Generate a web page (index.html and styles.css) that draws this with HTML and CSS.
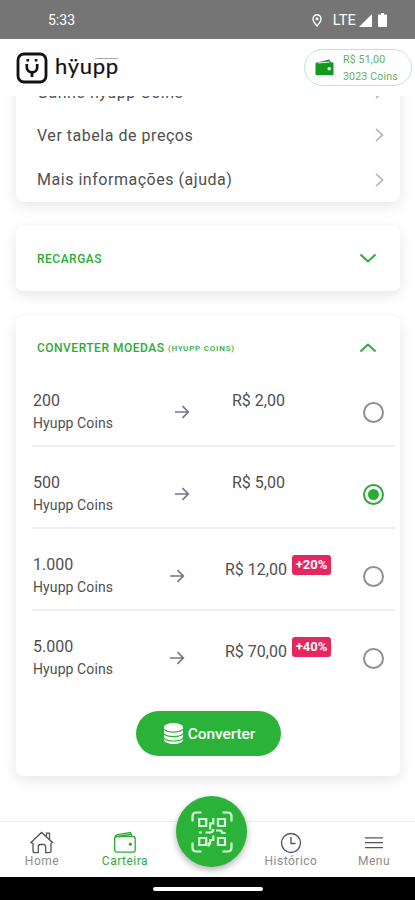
FILE: index.html
```html
<!DOCTYPE html>
<html lang="pt-BR">
<head>
<meta charset="utf-8">
<meta name="viewport" content="width=device-width, initial-scale=1">
<title>Hyupp Carteira</title>
<link rel="stylesheet" href="styles.css">
</head>
<body>
<div class="status">
  <span class="clock">5:33</span>
  <span class="status-icons">
    <svg width="10" height="13" viewBox="0 0 10 13"><path d="M5 .8C2.700.8 1 2.500 1 4.700c0 3 4 7.300 4 7.300s4-4.300 4-7.300C9 2.500 7.300.8 5 .8z" fill="none" stroke="#fff" stroke-width="1.400"/><circle cx="5" cy="4.800" r="1.500" fill="#fff"/></svg>
    <span class="lte">LTE</span>
    <svg class="signal" width="13" height="13" viewBox="0 0 13 13"><path d="M13 0v13H0z" fill="#fff"/></svg>
    <svg class="battery" width="9" height="14" viewBox="0 0 9 14"><path d="M3 0h3v1.500h2c.6 0 1 .4 1 1V13c0 .6-.4 1-1 1H1c-.6 0-1-.4-1-1V2.500c0-.6.4-1 1-1h2z" fill="#fff"/></svg>
  </span>
</div>
<header class="header">
  <div class="brand">
    <svg width="32" height="32" viewBox="0 0 32 32" fill="none" stroke="#111"><rect x="2" y="2" width="28" height="28" rx="6" stroke-width="2.800"/><path d="M10.800 12v3.200a5.200 5.200 0 0 0 10.400 0V12M16 20.500v4.500" stroke-width="2.700"/><path d="M10.500 8.300h2.600M18.800 8.300h2.600" stroke-width="2.400"/></svg>
    <span class="wordmark">hÿupp</span>
  </div>
  <div class="balance">
    <svg width="19" height="17" viewBox="0 0 19 17"><path d="M1 3.800 14.500.5l1.200 2.700H17c.8 0 1.500.6 1.500 1.500v10c0 .9-.7 1.600-1.500 1.600H2.200C1.200 16.300.5 15.600.5 14.700V5.200C.5 4.500.6 4 1 3.800z" fill="#109a1e"/><path d="M3 4 14.500 3.100" stroke="#fff" stroke-width=".9"/><circle cx="14.200" cy="9.800" r="1.700" fill="#fff"/></svg>
    <div class="amounts"><span>R$ 51,00</span><span>3023 Coins</span></div>
  </div>
</header>
<main class="content">
  <section class="card links">
    <div class="link"><span>Ganhe hyupp Coins</span><svg width="9" height="14" viewBox="0 0 9 14"><path d="m1 1 6.500 6L1 13"/></svg></div>
    <div class="link"><span>Ver tabela de preços</span><svg width="9" height="14" viewBox="0 0 9 14"><path d="m1 1 6.500 6L1 13"/></svg></div>
    <div class="link"><span>Mais informações (ajuda)</span><svg width="9" height="14" viewBox="0 0 9 14"><path d="m1 1 6.500 6L1 13"/></svg></div>
  </section>
  <section class="card closed">
    <h2 class="title"><span>RECARGAS</span><svg width="18" height="11" viewBox="0 0 18 11"><path d="m1.500 1.500 7.500 7 7.500-7"/></svg></h2>
  </section>
  <section class="card open">
    <h2 class="title"><span>CONVERTER MOEDAS <small>(HYUPP COINS)</small></span><svg width="18" height="11" viewBox="0 0 18 11"><path d="m1.500 8.500 7.500-7 7.500 7"/></svg></h2>
    <div class="rows">
      <div class="row">
        <div class="coins"><b>200</b><span>Hyupp Coins</span></div>
        <svg class="arrow" width="16" height="14" viewBox="0 0 16 14"><path d="M1 7h13M8.500 1.200 14.300 7l-5.800 5.800"/></svg>
        <div class="price">R$ 2,00</div><i class="radio"></i>
      </div>
      <div class="row">
        <div class="coins"><b>500</b><span>Hyupp Coins</span></div>
        <svg class="arrow" width="16" height="14" viewBox="0 0 16 14"><path d="M1 7h13M8.500 1.200 14.300 7l-5.800 5.800"/></svg>
        <div class="price">R$ 5,00</div><i class="radio on"></i>
      </div>
      <div class="row bonus">
        <div class="coins"><b>1.000</b><span>Hyupp Coins</span></div>
        <svg class="arrow" width="16" height="14" viewBox="0 0 16 14"><path d="M1 7h13M8.500 1.200 14.300 7l-5.800 5.800"/></svg>
        <div class="price">R$ 12,00<em>+20%</em></div><i class="radio"></i>
      </div>
      <div class="row bonus">
        <div class="coins"><b>5.000</b><span>Hyupp Coins</span></div>
        <svg class="arrow" width="16" height="14" viewBox="0 0 16 14"><path d="M1 7h13M8.500 1.200 14.300 7l-5.800 5.800"/></svg>
        <div class="price">R$ 70,00<em>+40%</em></div><i class="radio"></i>
      </div>
    </div>
    <button class="convert">
      <svg width="19" height="21" viewBox="0 0 20 21" preserveAspectRatio="none"><path d="M0 4v13c0 2.200 4.500 4 10 4s10-1.800 10-4V4z" fill="#fff"/><ellipse cx="10" cy="4" rx="10" ry="4" fill="#fff"/><path d="M0 6.200c1.500 2 5.500 3 10 3s8.500-1 10-3M0 10.600c1.500 2 5.500 3 10 3s8.500-1 10-3M0 15c1.500 2 5.500 3 10 3s8.500-1 10-3" fill="none" stroke="#2bb239" stroke-width="1.200"/></svg>
      <span>Converter</span>
    </button>
  </section>
</main>
<nav class="nav">
  <a class="tab"><svg width="24" height="23" viewBox="0 0 24 23"><path d="M1 11.500 11.500 1.500 22.500 11.500 21 12.500V20c0 1-.6 1.700-1.600 1.700h-3.700v-6c0-1.300-.9-2.200-2.200-2.200h-3c-1.300 0-2.200.9-2.200 2.200v6H4.600c-1 0-1.600-.7-1.600-1.700v-7.500zM16.500 5V2.200h3v6"/></svg><span>Home</span></a>
  <a class="tab active"><svg width="24" height="23" viewBox="0 0 24 23"><rect x="1.700" y="5.500" width="20.500" height="15.700" rx="2.500"/><path d="M2 6.500C2 4.500 3 4 4.500 3.600L17.500 1.500l1.500 4M5 5.300l12.500-1.800"/><circle cx="17.300" cy="13.200" r="1" fill="#2bac36"/></svg><span>Carteira</span></a>
  <a class="tab scan"><span class="fab"><svg width="42" height="42" viewBox="0 0 42 42"><path d="M1.500 10.500V5.500c0-2.500 1.500-4 4-4h5M31.500 1.500h5c2.500 0 4 1.500 4 4v5M1.500 31.500v5c0 2.500 1.500 4 4 4h5M31.500 40.500h5c2.500 0 4-1.500 4-4v-5"/><path d="M8.200 8h7v7h-7zM27 8h7v7h-7zM8.200 27h7v7h-7zM27 27h7v7h-7z"/><path d="M22.300 7v5.500h-3.200v6M8 21.500h3M14.500 21.500h4.500c2 0 3.300-1 3.300-3.500M25 19.500h4c1.500 0 2 .8 2 2.500h3.500M22.300 24.500v4.500h-3.200v3.500h-2.500M19 34.500h-2.500"/></svg></span></a>
  <a class="tab"><svg width="24" height="23" viewBox="0 0 24 23"><circle cx="12" cy="12" r="9.500"/><path d="M12 6v6.500h4.500"/></svg><span>Histórico</span></a>
  <a class="tab"><svg width="24" height="23" viewBox="0 0 24 23"><path d="M3 6.800h18M3 11.700h18M3 16.600h18"/></svg><span>Menu</span></a>
</nav>
<div class="gesture"><i></i></div>
</body>
</html>
```
FILE: styles.css
```css
* { box-sizing: border-box; }
body { margin: 0; width: 415px; height: 900px; display: flex; flex-direction: column; overflow: hidden; background: #fff; font-family: Roboto, "Liberation Sans", sans-serif; color: #505050; }
svg { display: block; flex: none; fill: none; }

.status { flex: none; height: 39px; background: #757575; color: #fff; display: flex; align-items: center; justify-content: space-between; padding: 1px 28px 0 48px; }
.clock { font-size: 14px; }
.status-icons { display: flex; align-items: center; }
.lte { font-size: 14.500px; margin: 0 3px 0 11px; letter-spacing: .2px; }
.battery { margin-left: 6px; }

.header { flex: none; height: 57px; display: flex; align-items: center; justify-content: space-between; padding: 0 3px 0 16px; background: #fff; }
.brand { display: flex; align-items: center; gap: 7px; color: #111; }
.wordmark { position: relative; margin-top: -3px; font: 400 22px/28px Lato, sans-serif; letter-spacing: .7px; -webkit-text-stroke: .2px #111; }
.wordmark::after { content: ""; position: absolute; right: 1px; top: 6px; width: 23px; height: 1px; background: #aaa; }
.balance { width: 108px; height: 37px; border: 1px solid #c2e6c5; border-radius: 19px; display: flex; align-items: center; gap: 9px; padding-left: 10px; }
.amounts { display: flex; flex-direction: column; font-size: 10.500px; line-height: 17px; letter-spacing: .2px; color: #5fae68; }

.content { flex: none; height: 725px; overflow: hidden; padding: 0 15px 0 16px; display: flex; flex-direction: column; }
.card { flex: none; background: #fff; border-radius: 7px; box-shadow: 0 4px 14px rgba(0,0,0,.1); }
.links { height: 131px; margin-top: -25px; padding: 0 16px 0 21px; }
.link { height: 44.500px; display: flex; align-items: center; justify-content: space-between; font-size: 16px; letter-spacing: .53px; }
.link:first-child { height: 42px; }
.link svg { stroke: #b2b2b2; stroke-width: 1.700; }
.closed { height: 65px; margin-top: 24px; }
.open { height: 460px; margin-top: 25px; display: flex; flex-direction: column; }
.title { margin: 0; height: 65px; padding: 0 23px 0 21px; display: flex; align-items: center; justify-content: space-between; color: #2bac36; font-size: 12px; font-weight: 500; letter-spacing: .5px; }
.title svg { stroke: #2bac36; stroke-width: 2; }
.title small { font-size: 8px; letter-spacing: .8px; vertical-align: 1px; }
.open .title { height: 64px; flex: none; }

.rows { margin: -1px 5px 0 16px; }
.row { height: 82px; display: flex; align-items: center; border-bottom: 2px solid #eee; padding: 14px 0 0 1px; }
.rows .row:first-child { height: 68px; padding-top: 0; }
.row:last-child { border-bottom-color: transparent; }
.coins { width: 141px; display: flex; flex-direction: column; }
.coins b { font-size: 16px; font-weight: 400; line-height: 22px; }
.coins span { font-size: 14px; line-height: 22px; letter-spacing: .1px; }
.arrow { stroke: #777589; stroke-width: 1.700; }
.price { font-size: 16px; line-height: 22px; margin: -22px 0 0 42px; display: flex; }
.radio { width: 21px; height: 21px; border: 2px solid #909090; border-radius: 50%; margin: 0 11px 0 auto; display: grid; place-items: center; }
.radio.on { border-color: #2bac36; }
.radio.on::after { content: ""; width: 11px; height: 11px; border-radius: 50%; background: #2bac36; }
.bonus .coins { width: 136px; }
.bonus .price { margin: -12px 0 0 40px; }
.price em { font-style: normal; font-weight: 700; font-size: 13px; line-height: 19px; height: 20px; width: 39px; text-align: center; background: #e32860; color: #fff; border-radius: 3px; margin: -4px 0 0 5px; }
.convert { width: 145px; height: 45px; margin: 18px 0 0 120px; border: 0; padding: 0 0 0 2px; border-radius: 23px; background: #2bb239; color: #fff; display: flex; align-items: center; justify-content: center; gap: 5px; font: 500 15.500px Roboto, sans-serif; letter-spacing: -.1px; }

.nav { flex: none; height: 56px; display: grid; grid-template-columns: repeat(5, 83px); border-top: 1px solid #eee; background: #fff; }
.tab { display: flex; flex-direction: column; align-items: center; padding: 9px 0 0 1px; font-size: 12px; line-height: 14px; letter-spacing: .5px; color: #8c8c8c; }
.tab svg { stroke: #555; stroke-width: 1.300; }
.tab.active { color: #2bac36; }
.tab.active svg { stroke: #2bac36; }
.scan { padding: 0; position: relative; }
.fab { position: absolute; top: -26px; left: 10px; width: 71px; height: 71px; border-radius: 50%; background: #2bb239; display: grid; place-items: center; box-shadow: 0 3px 7px rgba(0,0,0,.3); }
.fab svg { stroke: #d9ffdc; stroke-width: 2.200; }
.gesture { flex: none; height: 23px; background: #000; display: flex; justify-content: center; padding-top: 10px; }
.gesture i { width: 110px; height: 4px; border-radius: 2px; background: #fff; }
```
